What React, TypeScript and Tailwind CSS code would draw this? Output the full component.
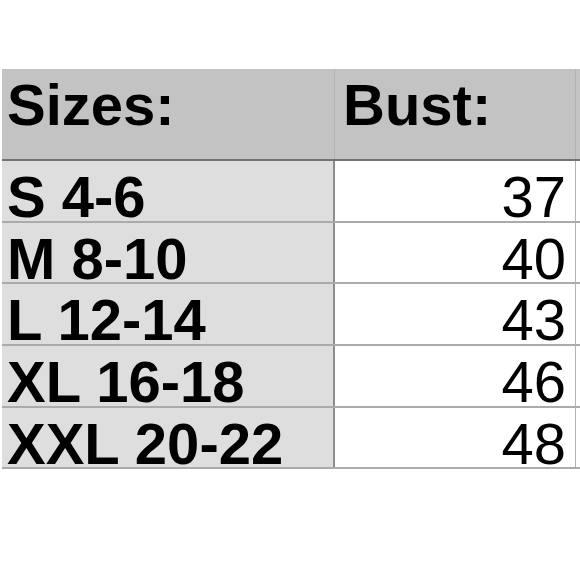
const rows = [
  { size: 'S 4-6', bust: 37, h: 'h-[62px]' },
  { size: 'M 8-10', bust: 40, h: 'h-[61px]' },
  { size: 'L 12-14', bust: 43, h: 'h-[62px]' },
  { size: 'XL 16-18', bust: 46, h: 'h-[62px]' },
  { size: 'XXL 20-22', bust: 48, h: 'h-[61px]' },
];

export default function App() {
  return (
    <div className="w-[580px] h-[580px] bg-white overflow-hidden pt-[69px] font-['Liberation_Sans',Arial,sans-serif] text-black">
      {/* header */}
      <div className="flex h-[92px] bg-[#c3c3c3] border-b-2 border-[#747474] ml-[2px]">
        <div className="w-[332px] pl-[5px] pt-[7px] text-[58px] leading-[58px] font-bold">Sizes:</div>
        <div className="w-[241px] border-l border-[#b3b3b3] pl-[8px] pt-[7px] text-[58px] leading-[58px] font-bold">Bust:</div>
        <div className="flex-1 border-l border-[#b3b3b3]" />
      </div>

      {rows.map((r) => (
        <div key={r.size} className={`flex ml-[2px] border-b-2 border-[#ababab] ${r.h}`}>
          <div className="w-[331px] bg-[#dedede] pl-[5px] pt-[7px] text-[58px] leading-[58px] font-bold whitespace-nowrap">
            {r.size}
          </div>
          <div className="w-[242px] border-l-2 border-[#8c8c8c] bg-white pr-[9px] pt-[7px] text-right text-[58px] leading-[58px]">
            {r.bust}
          </div>
          <div className="flex-1 border-l border-[#b3b3b3]" />
        </div>
      ))}
    </div>
  );
}
